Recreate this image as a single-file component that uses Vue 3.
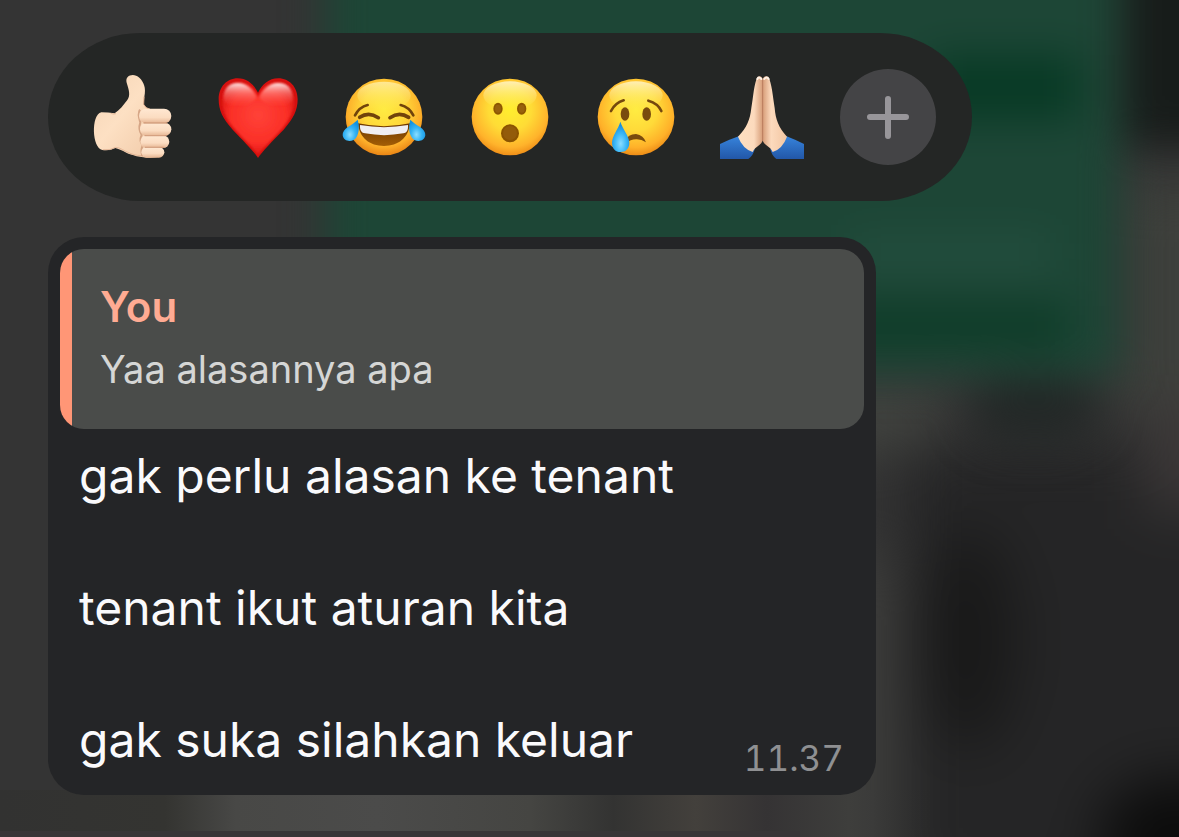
<script setup>
import { ref } from 'vue'

const reactions = [
  { id: 'thumb', label: 'Thumbs up', box: '12 27 288 288' },
  { id: 'heart', label: 'Red heart', box: '15 27 288 288' },
  { id: 'joy', label: 'Tears of joy', box: '18 27 288 288' },
  { id: 'wow', label: 'Surprised', box: '15 27 288 288' },
  { id: 'cry', label: 'Crying', box: '15 27 288 288' },
  { id: 'pray', label: 'Folded hands', box: '18 27 288 288' },
]
const picked = ref('')
const lines = ['gak perlu alasan ke tenant', '', 'tenant ikut aturan kita', '', 'gak suka silahkan keluar']
</script>

<template>
  <main class="screen">
    <svg class="backdrop" viewBox="0 0 1179 837" preserveAspectRatio="none" aria-hidden="true">
      <defs>
        <filter id="soft" x="-50%" y="-50%" width="200%" height="200%" color-interpolation-filters="sRGB"><feGaussianBlur stdDeviation="28" /></filter>
        <filter id="mid" x="-50%" y="-50%" width="200%" height="200%" color-interpolation-filters="sRGB"><feGaussianBlur stdDeviation="20" /></filter>
        <linearGradient id="strip" x1="0" x2="1">
          <stop offset="0" stop-color="#323231" />
          <stop offset=".14" stop-color="#343431" />
          <stop offset=".2" stop-color="#484846" />
          <stop offset=".32" stop-color="#4b4b4a" />
          <stop offset=".45" stop-color="#454542" />
          <stop offset=".52" stop-color="#333332" />
          <stop offset=".59" stop-color="#43403c" />
          <stop offset=".65" stop-color="#353334" />
          <stop offset=".72" stop-color="#3e3e3c" />
          <stop offset=".74" stop-color="#3b3b3a" />
          <stop offset=".79" stop-color="#2a2a2a" stop-opacity="0" />
        </linearGradient>
      </defs>
      <rect width="1179" height="837" fill="#343434" />
      <g filter="url(#soft)">
        <rect x="905" y="445" width="400" height="450" fill="#252526" />
        <rect x="820" y="385" width="120" height="60" fill="#434541" />
        <rect x="1115" y="180" width="170" height="240" fill="#3e403c" />
        <rect x="1145" y="400" width="120" height="110" fill="#3c3838" />
        <rect x="820" y="560" width="75" height="380" fill="#3f3f3d" />
        <ellipse cx="970" cy="640" rx="45" ry="110" fill="#191919" />
        <ellipse cx="1179" cy="837" rx="80" ry="60" fill="#0c0c0c" />
      </g>
      <g filter="url(#mid)">
        <rect x="325" y="-60" width="795" height="435" fill="#1d4636" />
        <rect x="930" y="55" width="150" height="65" fill="#083a25" />
        <rect x="800" y="305" width="270" height="40" fill="#0d3b27" />
        <rect x="850" y="238" width="200" height="30" fill="#234f3f" />
        <rect x="1125" y="-60" width="120" height="205" fill="#171c1a" />
        <ellipse cx="1035" cy="410" rx="65" ry="35" fill="#232827" />
      </g>
      <rect y="790" width="1179" height="47" fill="url(#strip)" />
      <rect y="831" width="800" height="6" fill="#383537" />
    </svg>

    <section class="reactions" aria-label="Reactions">
      <button
        v-for="r in reactions"
        :key="r.id"
        type="button"
        class="reaction"
        :aria-label="r.label"
        :aria-pressed="picked === r.id"
        @click="picked = r.id"
      >
        <svg :viewBox="r.box" aria-hidden="true">
          <template v-if="r.id === 'thumb'">
            <defs>
              <linearGradient id="skin" x1="0" x2="1" y1="0" y2="1">
                <stop offset="0" stop-color="#f5d4b5" /><stop offset=".45" stop-color="#fde0c3" /><stop offset="1" stop-color="#f0c8a6" />
              </linearGradient>
              <linearGradient id="finger" x1="0" x2="0" y1="0" y2="1">
                <stop offset="0" stop-color="#ffe8d2" /><stop offset=".6" stop-color="#fbdcc1" /><stop offset="1" stop-color="#e6b592" />
              </linearGradient>
            </defs>
            <path d="M64 157Q84 157 104 160C119 150 130 136 142 120C152 106 147 91 140 68C134 45 162 38 178 53C191 65 199 83 193 110L191 132Q194 142 210 147L240 180L244 288C210 300 160 288 139 278Q119 267 106 264Q90 273 67 270C36 265 32 165 64 157Z" fill="url(#skin)" />
            <path d="M68 269Q90 272 107 262M108 161Q101 164 92 160M108 263C122 259 145 288 188 287" fill="none" stroke="#dba98a" stroke-width="3" opacity=".7" />
            <path d="M192 110L191 133Q197 146 210 148" fill="none" stroke="#dcab8c" stroke-width="3" />
            <path d="M180 149Q172 160 181 188Q174 207 185 225Q177 243 188 256Q181 272 188 289" fill="none" stroke="#c99474" stroke-width="6" opacity=".75" />
            <rect x="177" y="146" width="97" height="44" rx="22" fill="url(#finger)" />
            <rect x="180" y="188" width="94" height="40" rx="20" fill="url(#finger)" />
            <rect x="181" y="226" width="87" height="38" rx="19" fill="url(#finger)" />
            <rect x="184" y="261" width="69" height="32" rx="16" fill="url(#finger)" />
            <path d="M192 189H261M195 227H259M196 262H250" stroke="#c98e6c" stroke-width="4" stroke-linecap="round" opacity=".75" />
          </template>

          <template v-else-if="r.id === 'heart'">
            <defs>
              <radialGradient id="red" gradientUnits="userSpaceOnUse" cx="160" cy="165" r="130">
                <stop offset="0" stop-color="#ff4238" /><stop offset=".65" stop-color="#fb2f27" /><stop offset="1" stop-color="#d91210" />
              </radialGradient>
              <linearGradient id="shine" x1="0" x2="0" y1="0" y2="1">
                <stop offset="0" stop-color="#fff" stop-opacity=".9" /><stop offset=".4" stop-color="#ffa8a4" stop-opacity=".5" /><stop offset="1" stop-color="#ff4a40" stop-opacity="0" />
              </linearGradient>
              <filter id="heartglow"><feGaussianBlur stdDeviation="3" /></filter>
            </defs>
            <path d="M159 294C149 276 114 241 83 209C53 176 41 151 41 118C41 81 65 55 98 55C127 55 147 74 159 98C171 74 191 55 220 55C253 55 278 81 278 118C278 151 265 176 236 209C204 241 170 276 159 294Z" fill="#d6100f" />
            <path d="M159 284C149 268 118 240 89 207C62 176 52 151 52 119C52 86 71 66 99 66C128 66 147 86 159 110C171 86 191 66 220 66C248 66 267 86 267 119C267 151 256 176 230 207C201 240 170 268 159 284Z" fill="url(#red)" filter="url(#heartglow)" />
            <path d="M55 119C55 85 73 69 98 69C127 69 147 92 154 112C139 140 85 160 55 119ZM264 119C264 85 246 69 220 69C191 69 171 92 164 112C179 140 232 160 264 119Z" fill="url(#shine)" filter="url(#heartglow)" />
          </template>

          <template v-else-if="r.id === 'joy'">
            <defs>
              <radialGradient id="faceA" cx=".5" cy=".4" r=".62">
                <stop offset="0" stop-color="#ffeb42" /><stop offset=".45" stop-color="#ffd83a" /><stop offset=".78" stop-color="#fdaf2a" /><stop offset="1" stop-color="#e67e12" />
              </radialGradient>
              <linearGradient id="faceShine" x1="0" x2="0" y1="0" y2="1">
                <stop offset="0" stop-color="#fff6c0" stop-opacity=".7" /><stop offset="1" stop-color="#fff36b" stop-opacity="0" />
              </linearGradient>
              <radialGradient id="tearA" cx=".45" cy=".7" r=".65">
                <stop offset="0" stop-color="#8bddff" /><stop offset=".5" stop-color="#36b4f4" /><stop offset="1" stop-color="#1390df" />
              </radialGradient>
              <linearGradient id="mouth" x1="0" x2="0" y1="0" y2="1"><stop offset="0" stop-color="#6b3600" /><stop offset="1" stop-color="#a35e05" /></linearGradient>
            </defs>
            <circle cx="162" cy="171" r="115" fill="url(#faceA)" />
            <ellipse cx="162" cy="107" rx="80" ry="42" fill="url(#faceShine)" />
            <path d="M75 166Q88 141 113 135M250 166Q237 141 212 135" fill="none" stroke="#71430b" stroke-width="8" stroke-linecap="round" />
            <path d="M89 172Q116 154 145 173M180 173Q208 154 236 172" fill="none" stroke="#71430b" stroke-width="11" stroke-linecap="round" />
            <path d="M84 190Q162 207 240 190C236 234 205 258 162 258C119 258 88 234 84 190Z" fill="url(#mouth)" />
            <path d="M90 195Q162 208 234 195C235 212 229 219 220 220Q162 231 105 220C95 219 89 211 90 195Z" fill="#f0eef2" />
            <path d="M83 179C88 197 88 216 80 230C70 249 41 247 38 226C36 204 67 197 83 179Z" fill="url(#tearA)" />
            <path d="M241 179C236 197 236 216 244 230C254 249 283 247 286 226C288 204 257 197 241 179Z" fill="url(#tearA)" />
          </template>

          <template v-else-if="r.id === 'wow'">
            <defs>
              <radialGradient id="faceB" cx=".5" cy=".4" r=".62">
                <stop offset="0" stop-color="#ffee2e" /><stop offset=".45" stop-color="#ffdc36" /><stop offset=".8" stop-color="#ffb32b" /><stop offset="1" stop-color="#ec8815" />
              </radialGradient>
              <linearGradient id="shineB" x1="0" x2="0" y1="0" y2="1">
                <stop offset="0" stop-color="#fffbe0" stop-opacity=".75" /><stop offset="1" stop-color="#fff36b" stop-opacity="0" />
              </linearGradient>
            </defs>
            <circle cx="159" cy="171" r="115" fill="url(#faceB)" />
            <ellipse cx="159" cy="106" rx="80" ry="42" fill="url(#shineB)" />
            <ellipse cx="123" cy="146" rx="14" ry="18" fill="#8d5600" /><ellipse cx="194" cy="146" rx="14" ry="18" fill="#8d5600" />
            <ellipse cx="123" cy="146" rx="9" ry="12" fill="#98610d" /><ellipse cx="194" cy="146" rx="9" ry="12" fill="#98610d" />
            <circle cx="159" cy="220" r="27" fill="#8b5300" /><circle cx="159" cy="219" r="21" fill="#935b0a" />
          </template>

          <template v-else-if="r.id === 'cry'">
            <defs>
              <radialGradient id="faceC" cx=".5" cy=".4" r=".62">
                <stop offset="0" stop-color="#ffec42" /><stop offset=".45" stop-color="#ffda39" /><stop offset=".8" stop-color="#ffb129" /><stop offset="1" stop-color="#e98514" />
              </radialGradient>
              <linearGradient id="shineC" x1="0" x2="0" y1="0" y2="1">
                <stop offset="0" stop-color="#fffbe0" stop-opacity=".75" /><stop offset="1" stop-color="#fff36b" stop-opacity="0" />
              </linearGradient>
              <radialGradient id="tearC" cx=".5" cy=".72" r=".6">
                <stop offset="0" stop-color="#8bdcff" /><stop offset=".55" stop-color="#3bb7f7" /><stop offset="1" stop-color="#188fde" />
              </radialGradient>
            </defs>
            <circle cx="159" cy="171" r="115" fill="url(#faceC)" />
            <ellipse cx="159" cy="106" rx="80" ry="42" fill="url(#shineC)" />
            <path d="M84 153Q96 129 122 121M196 122Q225 130 235 153" fill="none" stroke="#75480d" stroke-width="8" stroke-linecap="round" />
            <ellipse cx="126" cy="162" rx="13" ry="20" fill="#794b0e" /><ellipse cx="191" cy="162" rx="13" ry="20" fill="#794b0e" />
            <path d="M126 243Q135 222 159 222Q182 226 189 247Q174 237 159 238Q143 238 128 250Z" fill="#794b0e" />
            <path d="M112 185C119 207 139 229 139 249C139 266 128 276 113 276C97 276 87 265 87 248C87 228 106 207 112 185Z" fill="url(#tearC)" />
          </template>

          <template v-else>
            <defs>
              <linearGradient id="handL" x1="0" x2="1"><stop offset="0" stop-color="#ffdfc0" /><stop offset=".65" stop-color="#fcdabd" /><stop offset="1" stop-color="#d79d78" /></linearGradient>
              <linearGradient id="handR" x1="0" x2="1"><stop offset="0" stop-color="#d79d78" /><stop offset=".35" stop-color="#fcdabd" /><stop offset="1" stop-color="#f2c6a2" /></linearGradient>
              <linearGradient id="sleeve" x1="0" x2="0" y1="0" y2="1"><stop offset="0" stop-color="#3784dc" /><stop offset="1" stop-color="#2257a8" /></linearGradient>
            </defs>
            <path d="M36 252Q65 238 94 228L140 268Q135 288 121 297H36Z" fill="url(#sleeve)" />
            <path d="M288 252Q260 238 234 228L187 268Q192 288 205 297H288Z" fill="url(#sleeve)" />
            <path d="M164 58Q160 45 149 50C138 68 136 111 130 144C126 179 117 203 90 230Q104 266 134 276C142 258 162 255 164 240Z" fill="url(#handL)" />
            <path d="M164 58Q168 45 181 50C191 68 195 111 200 144C203 179 212 203 237 230Q224 266 194 276C187 258 166 255 164 240Z" fill="url(#handR)" />
            <path d="M164 58V242" stroke="#c08260" stroke-width="3" />
            <path d="M148 57Q152 48 160 57M169 57Q176 48 182 57" fill="none" stroke="#fff1e5" stroke-width="6" stroke-linecap="round" />
          </template>
        </svg>
      </button>
      <button type="button" class="reaction more" aria-label="More reactions">
        <svg viewBox="0 0 96 96" aria-hidden="true">
          <path d="M48 30V67M30 48H66" fill="none" stroke="#98969a" stroke-width="6" stroke-linecap="round" />
        </svg>
      </button>
    </section>

    <article class="bubble">
      <blockquote class="quote">
        <strong class="author">You</strong>
        <p class="quoted">Yaa alasannya apa</p>
      </blockquote>
      <div class="body">
        <div class="message">
          <p v-for="(line, i) in lines" :key="i" class="line">{{ line }}</p>
        </div>
        <time class="time">11.37</time>
      </div>
    </article>
  </main>
</template>

<style>
body {
  margin: 0;
  background: #2b2b2b;
}
</style>

<style scoped>
.screen {
  position: relative;
  box-sizing: border-box;
  min-height: 100vh;
  padding: 33px 48px 42px;
  display: flex;
  flex-direction: column;
  align-items: flex-start;
  gap: 36px;
  overflow: hidden;
  font-family: Inter, "Liberation Sans", sans-serif;
}
.backdrop {
  position: absolute;
  inset: 0;
  width: 100%;
  height: 100%;
}
.reactions {
  position: relative;
  display: flex;
  gap: 30px;
  padding: 36px;
  border-radius: 92px / 84px;
  background: #242625;
}
.reaction {
  width: 96px;
  height: 96px;
  padding: 0;
  border: 0;
  border-radius: 50%;
  background: none;
  cursor: pointer;
}
.reaction svg {
  display: block;
  width: 100%;
  height: 100%;
}
.more {
  background: #444446;
}
.bubble {
  position: relative;
  box-sizing: border-box;
  width: 100%;
  max-width: 828px;
  padding: 12px;
  border-radius: 36px;
  background: #242527;
}
.quote {
  margin: 0;
  padding: 28px 40px;
  border-radius: 24px;
  background: linear-gradient(to right, #ff9676 12px, #4a4c4a 12px);
}
.author {
  display: block;
  font-size: 42px;
  line-height: 60px;
  font-weight: 600;
  color: #ffab93;
}
.quoted {
  margin: 0;
  font-size: 38px;
  line-height: 64px;
  color: #d5d6d5;
}
.body {
  display: flex;
  justify-content: space-between;
  align-items: flex-end;
  padding: 14px 20px 0 19px;
}
.message {
  padding-bottom: 10px;
}
.line {
  margin: 0;
  min-height: 66px;
  font-size: 48px;
  line-height: 66px;
  color: #fafafc;
}
.time {
  padding-bottom: 4px;
  font-size: 35px;
  line-height: 42px;
  font-variant-numeric: tabular-nums;
  color: #8f9092;
}
</style>
